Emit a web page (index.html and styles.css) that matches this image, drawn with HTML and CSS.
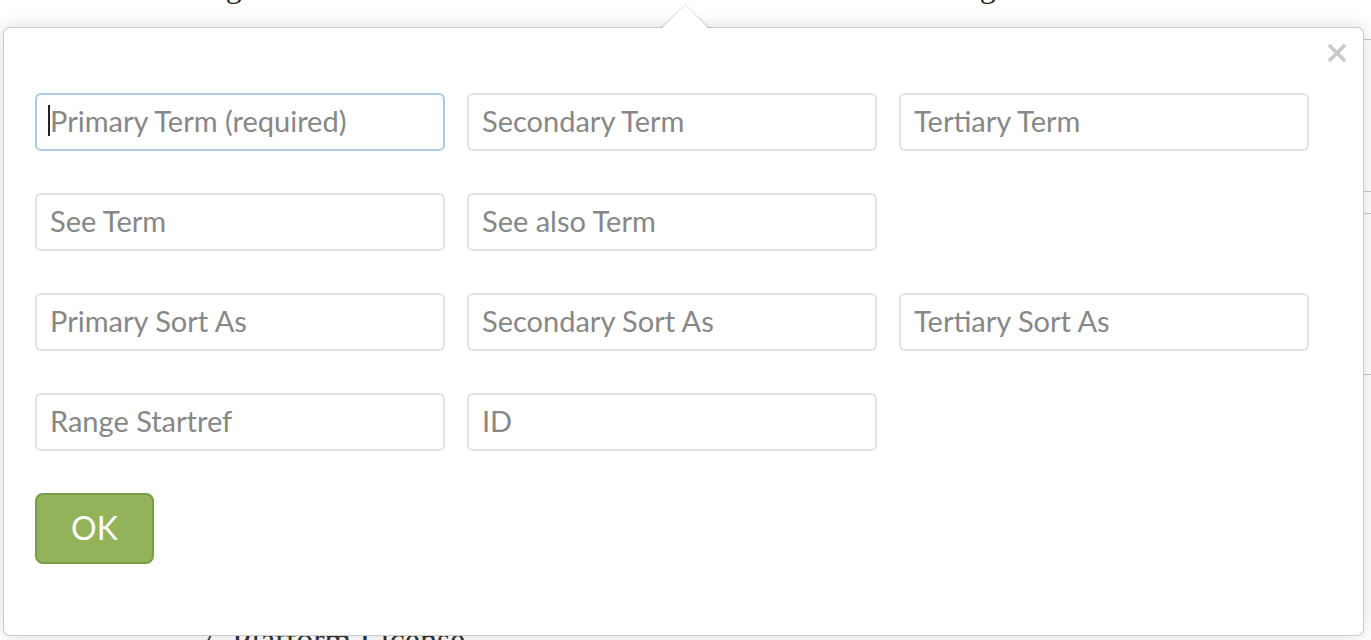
FILE: index.html
```html
<!DOCTYPE html>
<html lang="en">
<head>
<meta charset="utf-8">
<title>Index term</title>
<link rel="stylesheet" href="styles.css">
</head>
<body>
<div class="page">
  <div class="bg-top">
    <span class="w1">Indexing</span>
    <span class="w2">Settings</span>
  </div>
  <div class="bg-rules">
    <div class="rule r1"></div>
    <div class="rule r2"></div>
    <div class="rule r3"></div>
    <div class="rule r4"></div>
  </div>
  <div class="bg-bottom">7. Platform License</div>

  <div class="popover">
    <div class="arrow"></div>
    <button class="close" type="button" aria-label="Close">
      <svg width="20" height="18" viewBox="0 0 20 18"><path d="M2 1 L18 17 M18 1 L2 17" stroke="#c9c9c9" stroke-width="3.6" fill="none"/></svg>
    </button>
    <form class="form">
      <div class="grid">
        <div class="field focus"><input type="text" placeholder="Primary Term (required)"><span class="caret"></span></div>
        <div class="field"><input type="text" placeholder="Secondary Term"></div>
        <div class="field"><input type="text" placeholder="Tertiary Term"></div>

        <div class="field"><input type="text" placeholder="See Term"></div>
        <div class="field"><input type="text" placeholder="See also Term"></div>
        <div class="field empty"></div>

        <div class="field"><input type="text" placeholder="Primary Sort As"></div>
        <div class="field"><input type="text" placeholder="Secondary Sort As"></div>
        <div class="field"><input type="text" placeholder="Tertiary Sort As"></div>

        <div class="field"><input type="text" placeholder="Range Startref"></div>
        <div class="field"><input type="text" placeholder="ID"></div>
        <div class="field empty"></div>
      </div>
      <button class="ok" type="button">OK</button>
    </form>
  </div>
</div>
</body>
</html>
```
FILE: styles.css
```css
html, body {
  margin: 0;
  padding: 0;
  background: #fff;
  overflow: hidden;
}
.page {
  position: relative;
  width: 1371px;
  height: 640px;
  overflow: hidden;
  font-family: "Liberation Serif", "Times New Roman", serif;
  color: #222;
}
.bg-top {
  display: flex;
  margin-top: -31px;
  height: 34px;
  font-size: 32px;
  line-height: 34px;
}
.bg-top .w1 {
  margin-left: 128px;
  width: 777px;
}
.bg-bottom {
  position: absolute;
  left: 198px;
  top: 620px;
  font-size: 34px;
  line-height: 40px;
  color: #333;
}
.bg-rules {
  position: absolute;
  right: 0;
  top: 0;
  width: 10px;
  height: 640px;
}
.rule {
  position: absolute;
  left: 0;
  right: 0;
  height: 1px;
  background: #c8c8c8;
}
.r1 { top: 39px; }
.r2 { top: 191px; }
.r3 { top: 213px; }
.r4 { top: 374px; }

.popover {
  position: absolute;
  left: 3px;
  top: 27px;
  width: 1361px;
  height: 609px;
  box-sizing: border-box;
  background: #fff;
  border: 1px solid rgba(0, 0, 0, 0.2);
  border-radius: 7px;
  box-shadow: 0 0 18px rgba(0, 0, 0, 0.14);
  padding: 65px 31px 0;
  font-family: Lato, "Open Sans", sans-serif;
}
.arrow {
  position: absolute;
  top: -24px;
  left: 656px;
  width: 0;
  height: 0;
  border-left: 25px solid transparent;
  border-right: 25px solid transparent;
  border-bottom: 24px solid rgba(0, 0, 0, 0.12);
}
.arrow::after {
  content: "";
  position: absolute;
  left: -24px;
  top: 1px;
  width: 0;
  height: 0;
  border-left: 24px solid transparent;
  border-right: 24px solid transparent;
  border-bottom: 24px solid #fff;
}
.close {
  position: absolute;
  top: 16px;
  right: 16px;
  border: 0;
  background: none;
  padding: 0;
  width: 20px;
  height: 18px;
  display: block;
  cursor: pointer;
}
.close svg { display: block; }

.form {
  margin: 0;
  display: flex;
  flex-direction: column;
  align-items: flex-start;
  gap: 42px;
}
.grid {
  display: grid;
  grid-template-columns: repeat(3, 410px);
  grid-auto-rows: 58px;
  column-gap: 22px;
  row-gap: 42px;
}
.field {
  position: relative;
}
.field input {
  width: 100%;
  height: 58px;
  box-sizing: border-box;
  border: 2px solid #e2e2e2;
  border-radius: 6px;
  padding: 0 12px 3px 13px;
  font-family: Lato, "Open Sans", sans-serif;
  font-size: 29px;
  color: #333;
  background: #fff;
  outline: none;
}
.field input::placeholder {
  color: #878787;
  opacity: 1;
}
.field.focus input {
  border-color: #aecbdd;
}
.caret {
  position: absolute;
  left: 13px;
  top: 12px;
  width: 2px;
  height: 31px;
  background: #222;
}
.ok {
  width: 119px;
  height: 71px;
  box-sizing: border-box;
  background: #93b35b;
  border: 2px solid #7a9b48;
  border-radius: 8px;
  color: #fff;
  font-family: Lato, "Open Sans", sans-serif;
  font-size: 32px;
  padding: 0 0 3px;
  cursor: pointer;
}
```
